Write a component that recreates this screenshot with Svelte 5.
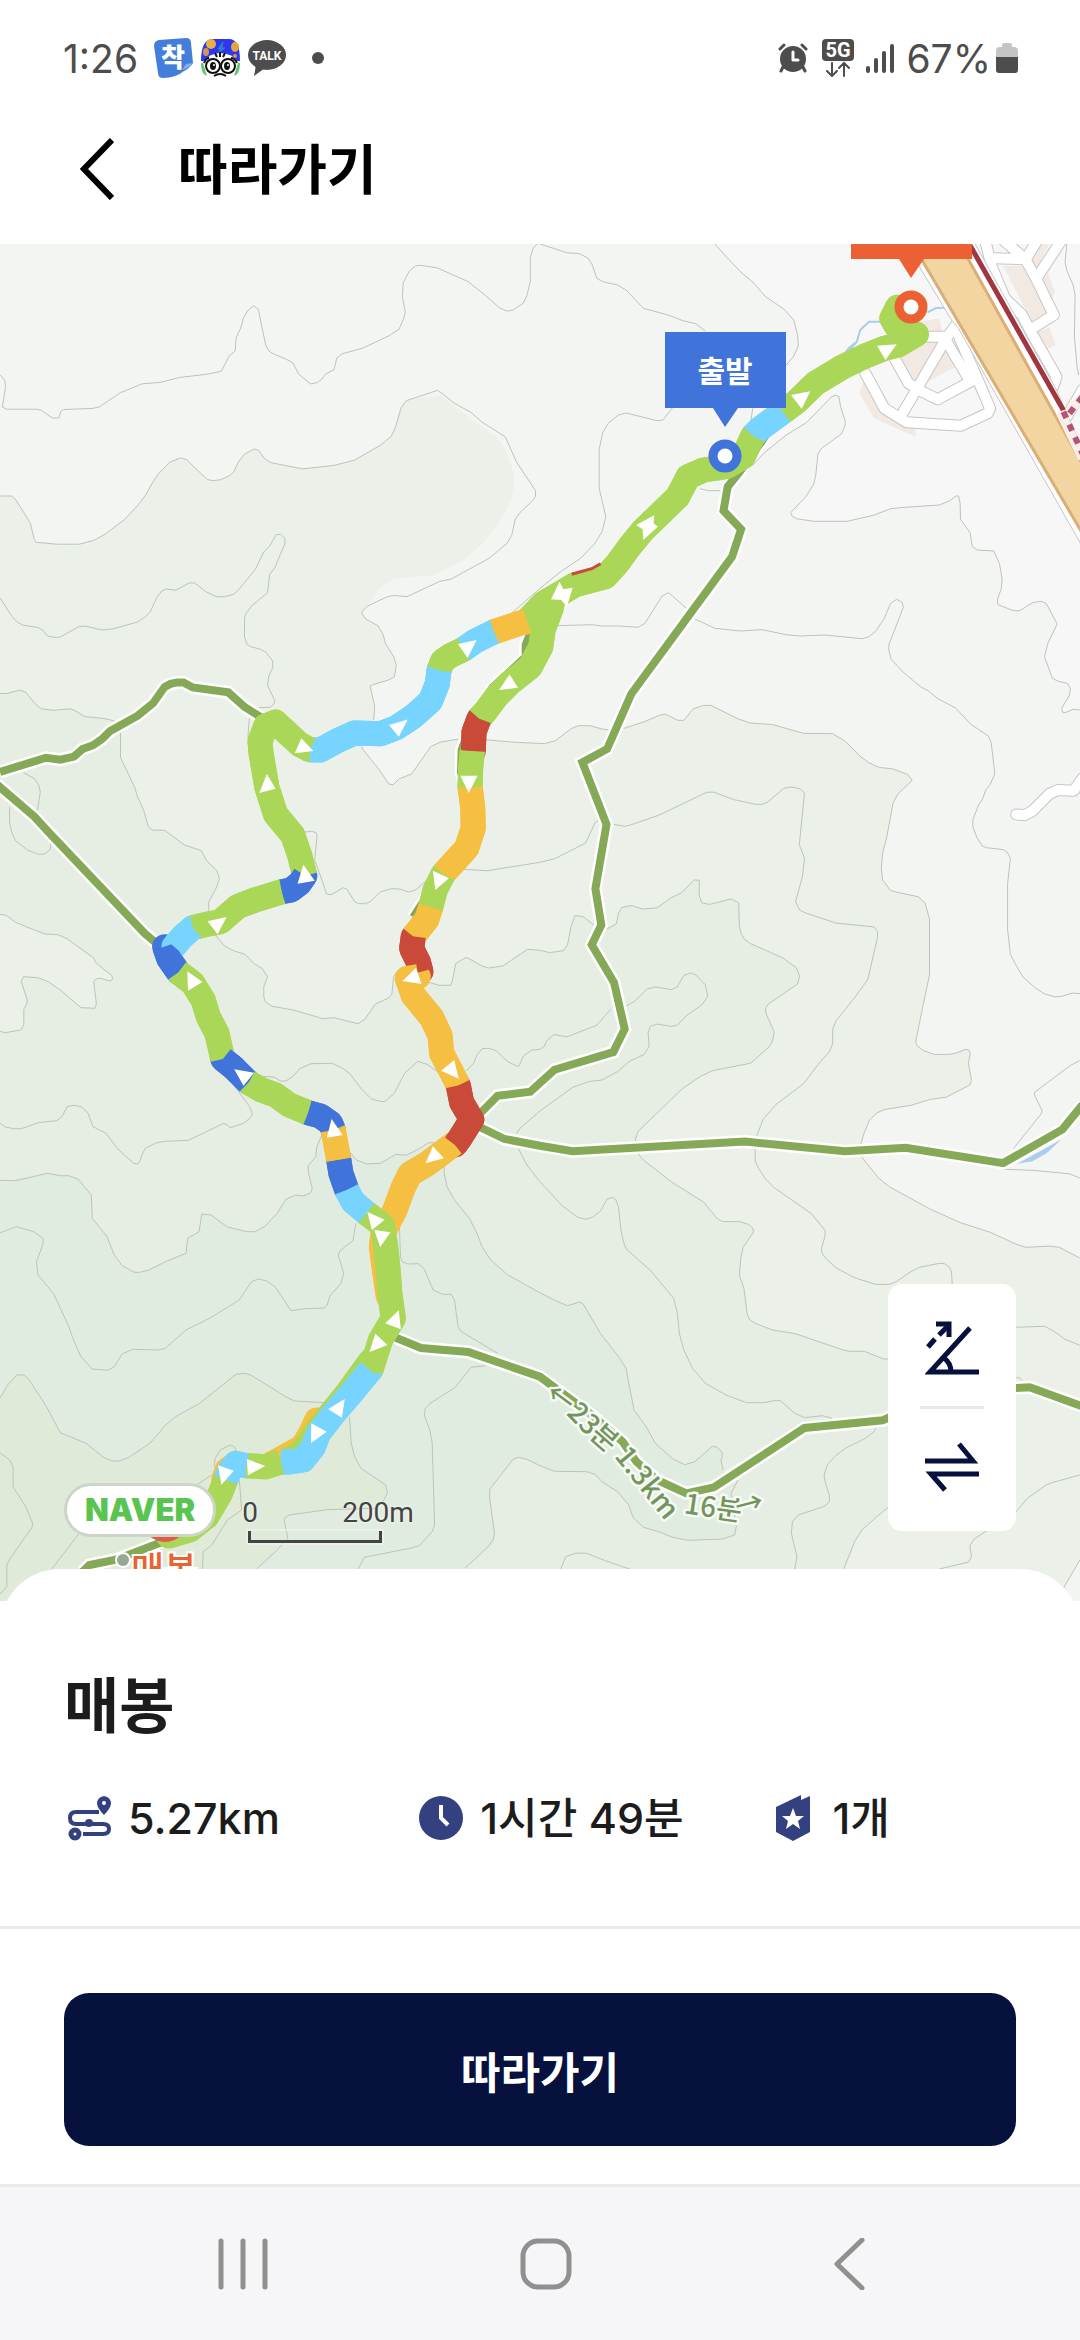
<script>
  // Survey sheets: origin on the map and drawing units per map unit.
  const sheets = {
    A: [540, 240, 2.904, 3],
    B: [0, 240, 2.904, 2.613],
    C: [0, 800, 2.904, 3],
    D: [540, 700, 2.904, 2.613],
    E: [0, 1250, 2.904, 3],
    F: [540, 1260, 2.904, 3],
    G: [360, 540, 3, 2.24]
  };

  // "A 10,20 30,40 / B 5,5" : a letter picks the sheet, a slash lifts the pen.
  function trace(text, closed = false) {
    let sheet = sheets.A;
    let pen = 'M';
    let out = '';
    for (const token of text.trim().split(/\s+/)) {
      if (sheets[token]) {
        sheet = sheets[token];
      } else if (token === '/') {
        pen = 'M';
      } else {
        const [x, y] = token.split(',').map(Number);
        out += `${pen}${(sheet[0] + x / sheet[2]).toFixed(1)} ${(sheet[1] + y / sheet[3]).toFixed(1)}`;
        pen = 'L';
      }
    }
    return closed ? out + 'Z' : out;
  }
  const joined = (text) => text.replaceAll('/', ' ');

  const plain = `A 508,12 545,55 590,103 615,123 655,170 708,207 737,240 748,285 750,318 735,352 715,375 / 618,505 612,545 600,560 / 600,695 650,640 715,585 775,547 845,472 858,465 868,470 873,500 887,545 885,560 875,582 818,625 807,642 801,705 795,732 772,770 728,818 732,828 745,836 795,844 892,844 968,826 1018,806 1060,802 1160,795 1188,783 1208,768 1216,768 1220,790 1221,838 1249,878 1253,905 1256,920 1270,930 1318,933 1334,970 1342,1015 1340,1045 1328,1080 1330,1094 1375,1112 1393,1112 1430,1088 1455,1084 1470,1090 1502,1152 1475,1210 1465,1250 1488,1315 1505,1324 1532,1330 1540,1345 1538,1365 1515,1405 1518,1417 1525,1418 1548,1408 1568,1410`;

  const slope2 = `B 0,669 33,669 45,678 68,710 88,740 100,783 105,790 165,795 230,795 272,785 305,769 362,730 403,690 425,664 442,635 460,611 494,580 525,569 542,574 602,626 620,629 642,626 668,615 680,604 692,580 710,560 738,546 750,549 768,571 787,582 880,598 970,589 1030,575 1105,536 1135,514 1147,493 1165,438 1180,420 1270,393 1283,400 1318,426 1367,450 1400,476 1467,514 1500,580 1555,655 1555,670 1548,680 1510,712 1496,730 1486,772 1473,792 1420,832 1310,886 1277,892 1182,932 1145,929 1125,932 1068,956 1053,970 1051,976 1062,990 1098,1008 1112,1030 1120,1055 1144,1090 1151,1112 1145,1142 1128,1150 1083,1162 1075,1166 1088,1218 1085,1255 / G 5,463 10,470 55,512 87,547 100,548 118,535 155,524 212,463 240,453 285,447 310,447 375,447 460,453 553,456 585,450 635,422 655,416 690,416 730,424 745,425 785,420 D 245,74 305,56 350,39 365,37 400,53 418,53 445,23 475,14 497,14 575,49 610,60 675,64 765,87 850,88 888,109 930,147 955,164 985,176 1025,180 1068,195 1081,210 1040,245 1025,270 1007,358 995,400 991,440 995,470 1018,498 1035,502 1098,514 1118,530 1131,572 1131,718 1112,800 1091,893 1095,903 1113,916 1145,926 1190,926 1210,922 1235,913 1245,914 1250,924 1244,948 1253,994 1248,1006 1180,1038 1132,1044 1078,1059 1000,1070 978,1079 957,1098 942,1130 932,1160 935,1195 983,1249 1015,1272 1135,1331 1222,1366 1308,1391 1383,1422 1412,1430 1480,1427 1508,1430 1568,1458`;

  // The same tone border where it runs inside the contour instead of along it.
  const slope2Area = slope2
    .replace('1270,393 1283,400 1318,426 1367,450 1400,476 1467,514 1500,580 1555,655 1555,670 1548,680 1510,712 1496,730 1486,772 1473,792 1420,832 1310,886 1277,892 1182,932 1145,929 1125,932',
      '1215,412 1283,408 1360,462 1440,514 1470,550 1492,610 1492,650 1480,690 1440,750 1400,795 1340,840 1260,875 1145,885 1100,910');

  const slope3 = `B 0,1185 20,1185 58,1176 75,1182 103,1213 120,1225 155,1229 205,1225 220,1231 245,1245 300,1250 330,1256 350,1285 350,1352 392,1432 398,1452 417,1490 C 431,80 443,90 478,91 536,135 585,152 600,182 630,212 637,235 630,260 606,307 606,340 628,408 652,438 680,453 710,462 740,492 762,506 777,530 766,560 766,590 770,605 790,619 852,630 938,656 970,653 1040,671 1060,657 1090,612 1128,594 1138,582 1143,530 1152,515 1240,545 1275,556 1308,556 1313,545 1324,490 1352,473 1360,475 1400,498 1418,504 1460,498 1532,448 1568,451 D 28,660 68,655 80,640 90,592 102,563 125,566 160,590 195,598 222,585 228,557 238,542 265,537 298,546 340,543 380,517 410,504 448,470 463,471 462,510 470,530 492,534 555,520 577,530 579,590 583,608 592,624 610,636 705,674 745,700 754,722 748,742 698,773 665,793 655,805 656,818 680,868 675,892 665,907 612,949 500,969 465,984 413,1016 358,1064 285,1127 277,1148 285,1186 300,1202 385,1261 475,1312 515,1355 530,1363 580,1363 605,1370 618,1380 620,1390 590,1430 583,1458 F 579,45 592,85 602,165 610,180 625,190 675,210 742,221 880,270 898,274 942,274 998,297 1020,297 / 1100,650 1010,743 975,773 935,810 915,842 882,927`;

  const slope4 = `C 0,1141 45,1142 137,1120 175,1127 200,1127 227,1138 265,1185 268,1255 310,1308 332,1365 355,1397 390,1417 405,1417 430,1411 483,1384 540,1360 545,1315 578,1295 586,1242 613,1245 660,1281 718,1295 740,1295 768,1280 805,1240 830,1198 858,1185 880,1188 900,1180 907,1167 895,1115 895,1097 917,1070 920,1040 935,1005 1015,1055 1035,1080 1065,1092 1105,1090 1150,1063 1180,1066 1210,1050 1245,1028 1260,1028 1290,1090 1290,1120 1298,1160 1320,1200 1365,1258 1385,1300 1400,1340 1425,1380 1475,1425 1568,1478 F 45,122 80,137 115,126 125,131 175,220 232,295 250,325 258,370 273,450 308,500 335,550 385,596 420,614 450,605 500,559 515,562 528,575 530,590 525,600 532,630 / 575,660 555,700 570,800 565,825 530,837 430,841 385,832 345,815 300,802 270,772 258,735 225,695 180,665 160,643 135,635 42,634 0,617 E 1530,628 1505,622 1490,628 1422,718 1422,745 1436,850 1432,870 1418,890 1350,955`;

  const slope5 = `E 0,445 22,405 50,374 70,375 85,390 135,470 175,548 250,580 302,623 325,633 345,633 375,622 435,580 465,545 475,530 510,500 580,460 685,373 710,370 728,375 830,440 855,453 945,458 / 1015,500 1020,580 1030,620 1048,655 1120,705 1125,730 1115,750 1090,775 950,779 840,795 826,805 826,815 836,865 800,905 745,957`;

  const hollow = `C 0,343 18,346 45,367 100,390 130,402 168,404 195,416 273,475 278,488 325,527 327,537 320,543 292,535 280,536 272,545 280,612 275,625 235,623 175,570 140,545 110,533 68,530 62,545 79,600 78,610 69,628 69,675 60,690 15,698 0,694`;

  const areas = [
    ['flat', joined(plain) + ' 1568,12'],
    ['tone2', joined(slope2Area) + ' 1568,2600 D -1568,2600'],
    ['tone3', joined(slope3) + ' 882,1100 E 0,1100'],
    ['tone2', hollow],
    ['tone4', joined(slope4) + ' E 1350,1100 0,1100'],
    ['tone5', joined(slope5) + ' E 745,1100 0,1100'],
    ['tone1', 'F 1568,900 1500,1025 1568,1025']
  ];

  const contours = [
    plain, slope2, slope3, slope4, slope5, hollow,
    'B 0,352 14,366 16,385 7,436 18,442 105,442 120,445 152,465 171,465 176,449 185,443 270,440 288,436 350,399 412,376 465,372 522,359 600,351 643,343 665,303 683,290 686,255 698,232 708,202 720,184 737,172 750,181 760,225 772,275 782,291 800,300 828,310 850,321 868,351 902,376 921,373 933,365 946,350 970,339 978,308 994,297 1052,283 1128,251 1159,233 1172,206 1177,188 1169,150 1171,112 1188,82 1206,68 1222,66 1270,73 1360,109 1410,145 1450,177 1473,186 1490,183 1520,165 1530,145 1540,108 1540,45 1548,22 1560,10',
    'A 0,12 78,38 115,41 140,55 152,75 165,115 182,125 225,135 250,150 300,205 372,225 415,242 452,251 480,273 / 385,503 357,540 340,542 250,519 228,525 198,550 182,578 172,628 172,745 191,830 180,875 158,912 118,955 60,995 0,1045 B 1480,980',
    'A 465,746 490,752 525,752 / 45,1157 152,1154 180,1158 230,1158 285,1162 305,1150 355,1068 373,1058 385,1068 425,1105 / 450,1137 508,1165 582,1173 645,1169 715,1184 755,1188 828,1185 935,1196 955,1190 975,1174 1000,1135 1018,1090 1036,1078 1052,1088 1055,1102 1013,1215 1013,1230 1020,1258 1055,1297 1105,1340 1127,1352 1157,1377 1207,1404 D 1252,64 1302,94 1310,110 1320,185 1320,195 1307,221 1295,235 1283,264 1275,272 1257,312 1257,332 1269,360 1285,382 1297,386 1345,391 1357,398 1366,413 1358,480 1358,600 1366,665 1385,697 1403,724 1438,752 1463,767 1495,776 1515,774 1545,766 1568,767',
    'A 1530,12 1525,65 1530,92 1548,135 1554,165 1552,290 1560,385 1565,405',
    'D 1568,942 1540,955 1435,1026 1438,1036 1458,1073 1455,1082 1375,1172 / 1345,1226 1430,1229 1538,1238 1568,1249',
    'B 0,935 35,984 50,998 65,1006 112,1013 125,1020 138,1035 165,1039 175,1037 230,1010 248,1009 295,1019 330,1016 400,998 422,985 436,972 455,935 470,917 483,912 510,915 550,896 565,896 598,919 628,932 652,932 678,926 692,915 742,860 766,815 783,800 802,770 815,769 827,780 828,792 798,856 783,874 777,921 730,957 712,980 710,990 710,1038 717,1055 725,1062 755,1069 772,1077 792,1100 792,1117 780,1141 777,1165 798,1203 796,1212 785,1221 752,1222 / 724,1250 720,1300',
    'C 880,97 905,94 918,98 921,105 914,180 940,255 948,282 962,284 997,263 1008,268 1030,305 1042,311 1062,311 1077,304 1105,275 1138,266 1160,267 1187,276 1207,270 1240,240 / 1340,208 1415,212 1568,187 D 42,415 132,374 160,320 170,315 / 215,325 245,330 262,327 345,301 485,241 505,241 562,260 628,273 648,272 662,266 708,231 730,227 755,232 768,243 753,378 768,413 762,462 742,527 754,549 770,556 860,583 970,593 980,605 980,620 952,730 915,776 860,838 850,860 850,898 840,919 808,952 766,1002 685,1057 648,1096 630,1138 625,1175 625,1205 635,1225 655,1252 680,1274 788,1342 828,1386 828,1400 817,1435 820,1447 828,1457 860,1484 912,1509 975,1527 1013,1527 1035,1520 1075,1495 1100,1483 1160,1472 1175,1473 1190,1483 1195,1495 1198,1540',
    'B 68,1392 100,1407 113,1425 117,1443 109,1490 / C 28,20 28,70 35,100 45,122 80,150 112,163 130,162 147,147 147,130',
    'C 0,970 15,981 40,986 62,986 112,968 165,962 180,950 195,920 215,916 235,920 255,938 270,980 308,1000 340,1045 388,1090 400,1092 408,1080 412,1065 422,1045 455,1028 480,1024 547,1021 650,970 660,975 668,983 708,970 730,950 733,940 725,920 700,885 675,850 / 752,829 795,831 815,843 830,843 850,830 870,806 903,791 965,790 992,803 1015,820 1050,868 1080,898 1110,905 1120,902 1145,880 1175,820 1213,784 1240,793 1280,822 / 1355,812 1375,790 1385,765 1400,746 1420,745 1440,752 1475,785 1500,798 1508,797 1520,768 1545,750 1568,748 D 12,906 20,890 40,874 78,880 165,850 205,808 / 250,800 275,787 312,755 335,750 382,757 398,750 418,720 438,713 452,718 480,744 487,775 470,797 425,825 398,850 380,853 340,847 320,853 314,870 317,905 303,926 262,943 225,971 180,993 142,997 95,1012 0,1074 C 1510,985 1500,1000 / 1505,1045 1530,1095 1568,1145 D 65,1322 110,1352 132,1357 152,1352 175,1336 195,1304 212,1300 220,1306 228,1325 235,1385 243,1418 250,1434 322,1492 F 388,115 398,155 405,222 417,268 443,325 480,370 540,405 600,428 650,428 685,421 698,422 740,460 768,473 820,467 848,475 / 975,505 970,515 945,535 890,563 860,586 835,613 825,645 828,665 840,705 840,725 828,738 750,765 733,785 730,820 746,890 740,927',
    'F 1383,352 1395,355 1402,362 / 1568,645 1490,667 1470,675 1415,715 1383,755 / 1383,202 1465,199 1490,212 1525,238 1568,256 / 1300,810 1260,838 1248,858 1253,890 1245,906 1160,927 / 1568,900 1520,985 / 60,927 75,890 105,879 135,880 190,902 260,927',
    'C 0,1298 48,1280 98,1295 125,1315 125,1332 106,1385 110,1425 E 155,130 200,230 210,260 235,320 268,357 312,361 332,350 355,312 385,298 460,300 480,295 540,240 610,204 695,150 730,95 750,87 775,93 800,112 845,182 885,176 942,174 950,165 958,138 990,100 998,70 982,15 C 987,1352 1025,1322 1033,1270',
    'C 1160,1280 1163,1370 1168,1385 1185,1392 1215,1391 1232,1407 1258,1470 1285,1483 1310,1483 E 1320,150 1330,230 1340,245 1445,310 / 1410,347 1368,352 1322,412 1252,458 1235,475 1232,495 1248,540 1255,580 1262,825 1255,845 1218,887 1190,895 1058,922 1040,957',
    'E 0,608 28,630 38,650 38,710 75,770 95,820 93,832 30,925 20,945 20,1010 0,1032 / 150,957 230,850 / 285,850 320,860 360,850 / 565,708 615,675 / 622,650 625,625 640,600 668,585 680,590 690,610 / 695,690 702,780 660,810 630,860 615,885 590,905 588,957'
  ];

  const trails = [
    'B 0,1390 133,1353 175,1358 215,1350 240,1330 270,1320 295,1305 320,1283 400,1243 445,1210 478,1168 495,1160 515,1156 533,1156 560,1169 663,1182 710,1220 770,1254',
    'B -10,1422 100,1507 C 140,95 420,400 460,435',
    'A 700,520 640,610 580,695 545,740 533,812 584,868 558,950 265,1362 D 195,128 123,163 193,325 161,493 178,588 150,640 215,738 246,860 213,920 42,966 C 1540,875 1445,887 1385,950',
    'C 1385,977 1465,1017 1568,1037 D 95,1179 595,1154 885,1179 1062,1170 1345,1210 1517,1122 1575,1058',
    'E 1130,255 1223,294 1360,306 1568,380 F 150,465 240,545 280,605 340,660 425,700 505,682 768,504 995,481 1040,460 1200,400 1383,384 1422,382 1575,439',
    'E 240,965 260,945 340,928 480,872',
    'G 560,150 515,202 497,235 497,262 398,330 345,390 305,470 303,520 330,590 330,650 305,680 250,740 160,845'
  ];

  const blocks = [
    'A 945,405 928,460 970,535 1090,590 1092,540 1000,500',
    'A 1160,235 1050,255 1040,350 1080,430 1110,435 1215,375 1172,290',
    'A 1345,78 1400,78 1475,220 1430,250', 'A 1430,12 1480,12 1440,90 1415,50',
    'A 1475,100 1495,155 1485,190 1455,130', 'A 1435,280 1480,262 1497,315 1470,330'
  ];
  const streets = [
    'A 1290,-10 1312,80 1350,175 1400,225 1428,280 1500,410 1490,440',
    'A 1320,55 1410,58 1440,115 1492,225 1430,265', 'A 1345,0 1410,58', 'A 1445,0 1410,58',
    'A 1515,0 1445,110', 'A 1575,450 1530,530',
    'A 945,400 1000,505 1065,547 1222,557 1300,520 1307,505 1215,285',
    'A 1125,290 1178,290', 'A 1215,245 1180,295 1050,525',
    'A 1178,300 1250,425 1155,478 1110,455 1070,430 1030,355',
    'D 1383,299 1407,301 1430,290 1480,245 1505,235 1550,237 1575,205'
  ];

  // Later legs are painted over earlier ones.
  const route = [
    ['orange', 'G 282,1352 240,1376 200,1398 150,1420 130,1450 105,1500 85,1530 C 1112,1300 1108,1340 1115,1400 1128,1490'],
    ['orange', 'E 680,645 660,660 650,690'],
    ['orange', 'E 920,510 905,545 880,590 790,642'],
    ['green', 'E 1078,330 1008,430 930,530 875,610 830,632'],
    ['green', 'G 575,150 550,200 542,240 510,285 450,320 410,350 375,385 357,400'],
    ['red', 'G 357,400 342,430 340,473'],
    ['green', 'G 337,473 332,510 330,555'],
    ['orange', 'G 331,555 338,600 340,645 320,690 290,715 250,748'],
    ['green', 'G 250,748 225,785 212,823'],
    ['orange', 'G 212,823 200,850 160,888'],
    ['red', 'G 160,888 155,915 175,945 183,967'],
    ['orange', 'G 175,978 142,982 160,1020 215,1070 240,1110 245,1150 270,1185 295,1222'],
    ['red', 'G 295,1222 305,1260 335,1298 300,1340 285,1355'],
    ['green', 'A 1078,210 1038,202 1022,235 1045,275 1093,283 1040,315 1000,325 940,350 880,380 800,430 745,485 705,516'],
    ['sky', 'A 705,516 640,565 618,588'],
    ['green', 'A 618,588 590,650 540,680 475,690 430,710 400,770 340,830 300,870 260,920 225,970 190,1010 100,1035 60,1060 10,1090 B 1525,1000'],
    ['orange', 'B 1530,995 1434,1024'],
    ['sky', 'B 1434,1024 1380,1048 1345,1070'],
    ['green', 'B 1345,1070 1310,1085 1285,1100 1275,1125'],
    ['sky', 'B 1275,1125 1270,1160 1250,1205 1200,1245 1150,1275 1105,1290 1030,1288 980,1308 930,1333 900,1332'],
    ['green', 'B 900,1332 870,1318 800,1260 772,1270 755,1310 758,1340 775,1430 800,1500 C 810,55 850,105 870,165 885,227'],
    ['blue', 'C 885,227 870,250 845,270 818,275'],
    ['green', 'C 818,275 740,300 690,320 640,365 600,373 560,383'],
    ['blue', 'C 478,440 490,475 518,517'],
    ['sky', 'C 560,383 530,410 505,440'],
    ['green', 'C 518,517 560,550 590,600 605,650 630,700 647,777'],
    ['blue', 'C 647,777 680,805 722,848'],
    ['green', 'C 722,848 760,870 800,885 840,915 895,938'],
    ['blue', 'C 895,938 930,948 960,970 968,990'],
    ['orange', 'C 968,990 975,1030 984,1080'],
    ['blue', 'C 984,1080 990,1120 1007,1170'],
    ['sky', 'C 1007,1170 1025,1205 1065,1240'],
    ['green', 'C 1065,1240 1110,1275 1120,1340 1128,1420 E 1132,130 1142,205 1105,270 1077,360'],
    ['sky', 'E 1075,360 1020,430 970,490 925,550 910,590 880,630 840,636 815,636'],
    ['green', 'E 815,636 770,650 715,647'],
    ['sky', 'E 715,647 685,640 665,665 655,690'],
    ['green', 'E 655,690 640,730 600,800 550,840 490,858']
  ];

  const arrows = [
    'A 979,317 1036,313 1003,360', 'A 729,465 785,454 760,506',
    'A 279,855 332,826 330,850 342,860 300,900 298,868',
    'A 32,1078 57,1025 68,1048 95,1043 78,1100 62,1080',
    'B 1330,1056 1384,1045 1358,1092', 'B 1130,1267 1184,1253 1158,1298',
    'B 875,1302 910,1335 856,1341', 'B 775,1395 800,1434 753,1445',
    'B 1480,1135 1504,1170 1449,1176', 'B 1337,1400 1387,1400 1361,1445',
    'C 881,194 914,242 864,251', 'C 603,364 658,351 632,403', 'C 544,514 588,546 546,572',
    'C 680,808 738,818 707,857', 'C 963,957 995,1005 949,1013', 'C 1257,212 1304,235 1264,270',
    'C 1208,503 1224,552 1169,543', 'C 1319,780 1332,836 1281,812', 'C 1257,1039 1289,1075 1236,1090',
    'C 1067,1236 1117,1259 1080,1290', 'C 1087,1290 1134,1297 1104,1341',
    'E 1158,181 1164,238 1119,220', 'E 1090,251 1125,285 1073,306', 'E 1001,447 993,503 953,477',
    'E 904,520 949,545 903,579', 'E 717,627 770,648 720,676', 'E 633,646 679,662 643,704'
  ];

  const signalBars = [
    [0, 23], [8, 15], [16, 8], [24, 1]
  ];
</script>

<div class="screen">
  <div class="status">
    <span class="clock">1:26</span>
    <svg class="app" width="39" height="40" viewBox="0 0 39 40" aria-hidden="true">
      <path d="M0 8Q0 3 5 2L32 0Q37 0 37 5L39 25Q36 30 30 33Q22 40 9 40Q4 40 4 35Z" fill="#447edb" />
      <path d="M28 32L32 26L39 25Q36 30 28 32Z" fill="#7fb0f2" />
      <text x="19" y="29" class="sticker">착</text>
    </svg>
    <svg class="app" width="39" height="38" viewBox="0 0 39 38" aria-hidden="true">
      <path d="M0 22Q0 0 12 0H28Q39 0 39 22Z" fill="#2f37ee" />
      <circle cx="10" cy="5" r="5" fill="#e7b04a" /><ellipse cx="5" cy="13" rx="3" ry="4" fill="#cf9a50" /><ellipse cx="34" cy="8" rx="4" ry="5" fill="#e0a640" /><circle cx="34" cy="17" r="2" fill="#cf9a50" />
      <path d="M22 3L17 10H20L17 14L24 9H21Z" fill="#2b82c8" stroke="#2b82c8" />
      <path d="M0 24H39Q39 37 31 37H8Q0 37 0 24Z" fill="#62c474" />
      <path d="M2 24Q8 14 19 14Q32 14 37 24L33 37H6Z" fill="#fff" />
      <path d="M14 14L16 18M24 14L22 18M19 13V18M3 24Q5 19 8 19M36 24Q34 19 30 19" fill="none" stroke="#111" stroke-width="2" />
      <circle cx="12" cy="27" r="7" fill="#fff" stroke="#111" stroke-width="2" /><circle cx="27" cy="27" r="7" fill="#fff" stroke="#111" stroke-width="2" />
      <ellipse cx="12" cy="27" rx="3" ry="4" fill="#111" /><ellipse cx="26" cy="27" rx="3" ry="4" fill="#111" />
      <circle cx="13" cy="26" r="1" fill="#fff" /><circle cx="27" cy="26" r="1" fill="#fff" />
      <path d="M13 37Q19 33 25 37" fill="none" stroke="#111" stroke-width="2" />
    </svg>
    <svg class="app" width="38" height="36" viewBox="0 0 38 36" aria-hidden="true">
      <ellipse cx="19" cy="15" rx="19" ry="15" fill="#4d4d4d" />
      <path d="M8 25L6 36L17 28Z" fill="#4d4d4d" />
      <text x="19" y="20" class="talk">TALK</text>
    </svg>
    <span class="dot"></span>
    <span class="spring"></span>
    <svg class="alarm" width="30" height="30" viewBox="0 0 30 30" aria-hidden="true">
      <circle cx="15" cy="16" r="13" fill="#4d4d4d" />
      <path d="M2 6L6 2M28 6L24 2M5 24L3 28M25 24L27 28" stroke="#4d4d4d" stroke-width="3" stroke-linecap="round" />
      <path d="M15 9V17H20" fill="none" stroke="#fff" stroke-width="3" stroke-linecap="round" stroke-linejoin="round" />
    </svg>
    <svg class="net" width="32" height="38" viewBox="0 0 32 38" aria-hidden="true">
      <rect width="32" height="22" rx="4" fill="#4d4d4d" />
      <text x="16" y="18" class="five">5G</text>
      <path d="M10 24V36M5 32L10 37L15 32M22 37V24M17 29L22 24L27 29" fill="none" stroke="#4d4d4d" stroke-width="2" stroke-linecap="round" />
    </svg>
    <svg class="bars" width="28" height="30" viewBox="0 0 28 30" aria-hidden="true">
      {#each signalBars as [x, y]}
        <rect {x} {y} width="4" height={30 - y} rx="2" fill="#4d4d4d" />
      {/each}
    </svg>
    <span class="percent">67%</span>
    <svg class="battery" width="22" height="30" viewBox="0 0 22 30" aria-hidden="true">
      <path d="M6 2Q6 0 8 0H14Q16 0 16 2V4H18Q22 4 22 8V14H0V8Q0 4 4 4H6Z" fill="#c4c4c4" />
      <path d="M0 14H22V27Q22 30 19 30H3Q0 30 0 27Z" fill="#4d4d4d" />
    </svg>
  </div>

  <header>
    <button class="back" aria-label="뒤로">
      <svg width="34" height="62" viewBox="0 0 34 62"><path d="M32 2L4 31L32 60" fill="none" stroke="#000" stroke-width="6" /></svg>
    </button>
    <h1>따라가기</h1>
  </header>

  <section class="map" aria-label="지도">
    <svg class="terrain" viewBox="0 244 1080 1357">
      <rect y="244" width="1080" height="1357" fill="#f3f5f2" />
      {#each areas as [tone, d]}<path class={tone} d={trace(d, true)} />{/each}
      {#each contours as d}<path class="contour" d={trace(d)} />{/each}
      <path d={trace('A 1180,203 1150,204 1125,217 / 990,245 955,245 930,270 920,305 865,367')} fill="none" stroke="#a9cdea" stroke-width="2" />
      <path d={trace('A 915,305 905,340 860,372 895,322', true) + trace('D 1385,1212 1430,1190 1515,1148 1470,1185 1430,1205', true)} fill="#a9cdea" />
      {#each blocks as d}<path d={trace(d, true)} fill="#f2e9e3" />{/each}
      {#each streets as d}<path class="street-edge" d={trace(d)} />{/each}
      {#each streets as d}<path class="street" d={trace(d)} />{/each}
      <path d={trace('A 1062,12 1195,240 1215,265 1575,920 1700,920 1500,450 1257,0', true)} fill="#fff" stroke="#c6c6c6" stroke-width="1" />
      <path d={trace('A 1082,12 1219,12 1575,672 1575,880', true)} fill="#f2d5a0" stroke="#d9ae79" stroke-width="3" />
      <path d={trace('A 1240,0 1525,520')} stroke="#a0363f" stroke-width="5" />
      <path d={trace('A 1510,515 1575,655 / 1575,470 1520,535')} stroke="#faeee8" stroke-width="9" />
      <path d={trace('A 1520,515 1575,640 / 1575,470 1530,530')} stroke="#b25675" stroke-width="6" stroke-dasharray="7 7" />

      {#each trails as d}<path class="trail-edge" d={trace(d)} />{/each}
      {#each trails as d}<path class="trail" d={trace(d)} />{/each}

      {#each route as [kind, d]}
        <path class="leg round {kind}" d={trace(d)} />
      {/each}
      {#each route as [kind, d]}
        <path class="leg {kind}" d={trace(d)} />
      {/each}
      <path d={trace('A 92,1003 118,995 150,986 176,971')} fill="none" stroke="#c94a39" stroke-width="3" />
      {#each arrows as d}<path d={trace(d, true)} fill="#fff" />{/each}

      <circle cx="165" cy="1519" r="23" fill="#e25a48" />
      <circle cx="123" cy="1560" r="8" fill="#fff" />
      <circle cx="123" cy="1560" r="6" fill="#95aa90" />
      <text class="peak" x="131" y="1583">매봉</text>

      <path id="leg-west" d={trace('F 10,412 75,462 125,515 185,570 222,600 265,655 365,785')} fill="none" />
      <path id="leg-east" d={trace('F 416,760 580,784 600,765 710,735')} fill="none" />
      <text class="walk"><textPath href="#leg-west">←23분 1.3km</textPath></text>
      <text class="walk"><textPath href="#leg-east">16분→</textPath></text>

      <path d="M851 240H972V259H924L911 278L899 259H851Z" fill="#ec6134" />
      <circle cx="911" cy="307" r="12" fill="#fff" stroke="#ec6134" stroke-width="9" />
      <path d="M665 332H786V408H738L725 427L713 408H665Z" fill="#4074da" />
      <circle cx="725" cy="456" r="12" fill="#fff" stroke="#4074da" stroke-width="9" />
      <text class="start" x="725" y="382">출발</text>
    </svg>

    <div class="legend">
      <span class="naver">NAVER</span>
      <div class="scale">
        <span>0</span><span>200m</span>
        <i></i>
      </div>
    </div>

    <div class="tools">
      <button aria-label="경사도">
        <svg width="54" height="54" viewBox="0 0 54 54" fill="none" stroke="#06113e" stroke-width="5">
          <path d="M54 51H5L45 7M19 37Q26 42 26 51M3 26L10 18M14 14L22 6" />
          <path d="M11 3H24V16" />
        </svg>
      </button>
      <hr />
      <button aria-label="방향 전환">
        <svg width="54" height="54" viewBox="0 0 54 54" fill="none" stroke="#06113e" stroke-width="5">
          <path d="M0 21H48L34 4M54 34H6L20 50" />
        </svg>
      </button>
    </div>
  </section>

  <main>
    <div class="summary">
      <h2>매봉</h2>
      <ul>
        <li>
          <svg width="50" height="50" viewBox="0 0 50 50" fill="none" stroke="#344181" stroke-width="4" aria-hidden="true">
            <path d="M35 19H12Q6 19 6 25Q6 31 12 31H39Q45 31 45 36Q45 41 39 41H19" />
            <circle cx="25" cy="30" r="4" fill="#344181" stroke="none" />
            <circle cx="11" cy="41" r="4" stroke-width="5" />
            <path d="M40 3Q47 4 47 11Q46 16 40 22Q34 16 33 11Q33 4 40 3Z" fill="#344181" stroke="none" />
            <circle cx="40" cy="10" r="2" fill="#fff" stroke="none" />
          </svg>
          <span>5.27km</span>
        </li>
        <li>
          <svg width="50" height="50" viewBox="0 0 50 50" aria-hidden="true">
            <circle cx="25" cy="25" r="22" fill="#344181" />
            <path d="M25 12V25L32 32" fill="none" stroke="#fff" stroke-width="4" />
          </svg>
          <span>1시간 49분</span>
        </li>
        <li>
          <svg width="50" height="50" viewBox="0 0 50 50" aria-hidden="true">
            <path d="M8 14L33 2V7L42 3V39L25 48L8 39Z" fill="#344181" />
            <path d="M25 15L28 23H36L30 28L32 36L25 31L18 36L20 28L14 23H22Z" fill="#fff" />
          </svg>
          <span>1개</span>
        </li>
      </ul>
    </div>
    <div class="action">
      <button>따라가기</button>
    </div>
  </main>

  <nav>
    <button aria-label="최근 앱">
      <svg width="52" height="52" viewBox="0 0 52 52"><path d="M4 3V49M26 3V49M48 3V49" /></svg>
    </button>
    <button aria-label="홈">
      <svg width="52" height="52" viewBox="0 0 52 52"><rect x="3" y="3" width="46" height="46" rx="15" /></svg>
    </button>
    <button aria-label="이전">
      <svg width="52" height="52" viewBox="0 0 52 52"><path d="M39 2L14 26L39 50" /></svg>
    </button>
  </nav>
</div>

<style>
  :global(body) {
    background: #fff;
  }
  .screen {
    display: flex;
    flex-direction: column;
    min-height: 100vh;
    font-family: Inter, "Noto Sans CJK KR", sans-serif;
    color: #1c1c1c;
  }
  button {
    border: 0;
    padding: 0;
    background: none;
    font: inherit;
    color: inherit;
    cursor: pointer;
  }
  svg {
    display: block;
    flex: none;
  }
  h1, h2, ul {
    margin: 0;
    padding: 0;
  }

  .status {
    display: flex;
    align-items: center;
    height: 72px;
    padding: 22px 62px 0 63px;
    color: #4d4d4d;
    font-size: 39px;
    font-weight: 400;
  }
  .clock {
    margin-right: 8px;
  }
  .app {
    margin-left: 8px;
  }
  .dot {
    width: 12px;
    height: 12px;
    margin-left: 26px;
    border-radius: 50%;
    background: #4d4d4d;
  }
  .spring {
    flex: 1;
  }
  .net {
    margin-left: 14px;
  }
  .bars {
    margin: 0 12px 0 12px;
  }
  .battery {
    margin-left: 5px;
  }
  .sticker {
    font: 900 26px "Noto Sans CJK KR", sans-serif;
    fill: #fff;
    text-anchor: middle;
  }
  .talk {
    font: 700 12px Roboto, sans-serif;
    fill: #fff;
    text-anchor: middle;
  }
  .five {
    font: 700 20px Roboto, sans-serif;
    fill: #fff;
    text-anchor: middle;
  }

  header {
    display: flex;
    align-items: center;
    gap: 64px;
    height: 146px;
    padding: 4px 80px 0;
    color: #000;
  }
  h1 {
    font-size: 54px;
    line-height: 80px;
    font-weight: 700;
  }
  .back svg {
    margin-bottom: 4px;
  }

  .map {
    position: relative;
  }
  .terrain {
    width: 100%;
    height: auto;
  }
  .flat { fill: #f7f7f7; }
  .tone1 { fill: #f3f5f2; }
  .tone2 { fill: #ebf0e9; }
  .tone3 { fill: #e6eee3; }
  .tone4 { fill: #e1ece0; }
  .tone5 { fill: #dfead9; }
  .contour {
    fill: none;
    stroke: #bcc4b9;
    stroke-width: 1px;
    stroke-linejoin: round;
  }
  .street-edge, .street {
    fill: none;
    stroke: #c6c6c6;
    stroke-width: 12px;
    stroke-linejoin: round;
    stroke-linecap: round;
  }
  .street {
    stroke: #fff;
    stroke-width: 10px;
  }
  .trail-edge, .trail {
    fill: none;
    stroke: #fff;
    stroke-width: 13px;
  }
  .trail {
    stroke: #86a957;
    stroke-width: 8px;
  }
  .leg {
    fill: none;
    stroke-width: 25px;
    stroke-linejoin: round;
  }
  .round { stroke-linecap: round; }
  .green { stroke: #abd759; }
  .sky { stroke: #76d4fe; }
  .blue { stroke: #4074da; }
  .orange { stroke: #f5c042; }
  .red { stroke: #c94a39; }
  .start {
    font: 700 30px "Noto Sans CJK KR", sans-serif;
    fill: #fff;
    text-anchor: middle;
  }
  .peak {
    font: 500 36px "Noto Sans CJK KR", sans-serif;
    fill: #e9622f;
    stroke: #fff;
    stroke-width: 4px;
    paint-order: stroke;
  }
  .walk {
    font: 500 28px "Noto Sans CJK KR", sans-serif;
    fill: #74945f;
    stroke: #f5faf3;
    stroke-width: 5px;
    stroke-linejoin: round;
    paint-order: stroke;
  }

  .legend {
    position: absolute;
    left: 64px;
    bottom: 58px;
    display: flex;
    align-items: flex-end;
    gap: 30px;
  }
  .naver {
    margin-bottom: 6px;
    padding: 0 18px;
    border: 3px solid #cdd5ca;
    border-radius: 27px;
    background: #fff;
    color: #5ac451;
    font-size: 31px;
    line-height: 48px;
    font-weight: 900;
  }
  .scale {
    display: grid;
    grid-template-columns: 16px 72px;
    justify-content: space-between;
    width: 172px;
    margin-left: -4px;
    color: #444;
    font: 400 28px/36px Roboto, sans-serif;
    text-shadow: 0 0 3px #fff;
  }
  .scale i {
    grid-column: 1 / -1;
    width: 128px;
    height: 9px;
    margin-left: 6px;
    border: solid #444;
    border-width: 0 3px 3px;
    box-shadow: 0 0 0 2px #eef3ebaa;
  }

  .tools {
    position: absolute;
    right: 64px;
    bottom: 70px;
    display: flex;
    flex-direction: column;
    width: 128px;
    border-radius: 14px;
    background: #fff;
  }
  .tools button {
    display: grid;
    place-items: center;
    height: 122px;
    padding-top: 6px;
  }
  .tools button:last-child {
    padding: 0 0 6px;
  }
  .tools hr {
    width: 64px;
    height: 3px;
    margin: 0 auto;
    border: 0;
    background: #e9e9e9;
  }

  main {
    position: relative;
    margin-top: -32px;
    border-radius: 60px 60px 0 0;
    background: #fff;
  }
  .summary {
    padding: 101px 64px 83px;
    border-bottom: 3px solid #e9eaea;
  }
  h2 {
    font-size: 60px;
    line-height: 72px;
    font-weight: 700;
  }
  ul {
    display: grid;
    grid-template-columns: 37% 37% 1fr;
    margin-top: 51px;
    list-style: none;
  }
  li {
    display: flex;
    align-items: center;
    gap: 14px;
    font-size: 43px;
    line-height: 50px;
    font-weight: 500;
    white-space: nowrap;
  }
  .action {
    padding: 64px 64px 38px;
  }
  .action button {
    width: 100%;
    height: 153px;
    border-radius: 25px;
    background: #06113e;
    color: #fff;
    font-size: 43px;
    font-weight: 700;
  }

  nav {
    display: grid;
    flex: 1;
    grid-template-columns: repeat(3, 1fr);
    min-height: 153px;
    padding: 0 80px 0 92px;
    border-top: 3px solid #e9eaec;
    background: #f6f6f8;
  }
  nav button {
    display: grid;
    place-items: center;
  }
  nav svg {
    fill: none;
    stroke: #909090;
    stroke-width: 5px;
    stroke-linecap: round;
    stroke-linejoin: round;
  }
</style>
